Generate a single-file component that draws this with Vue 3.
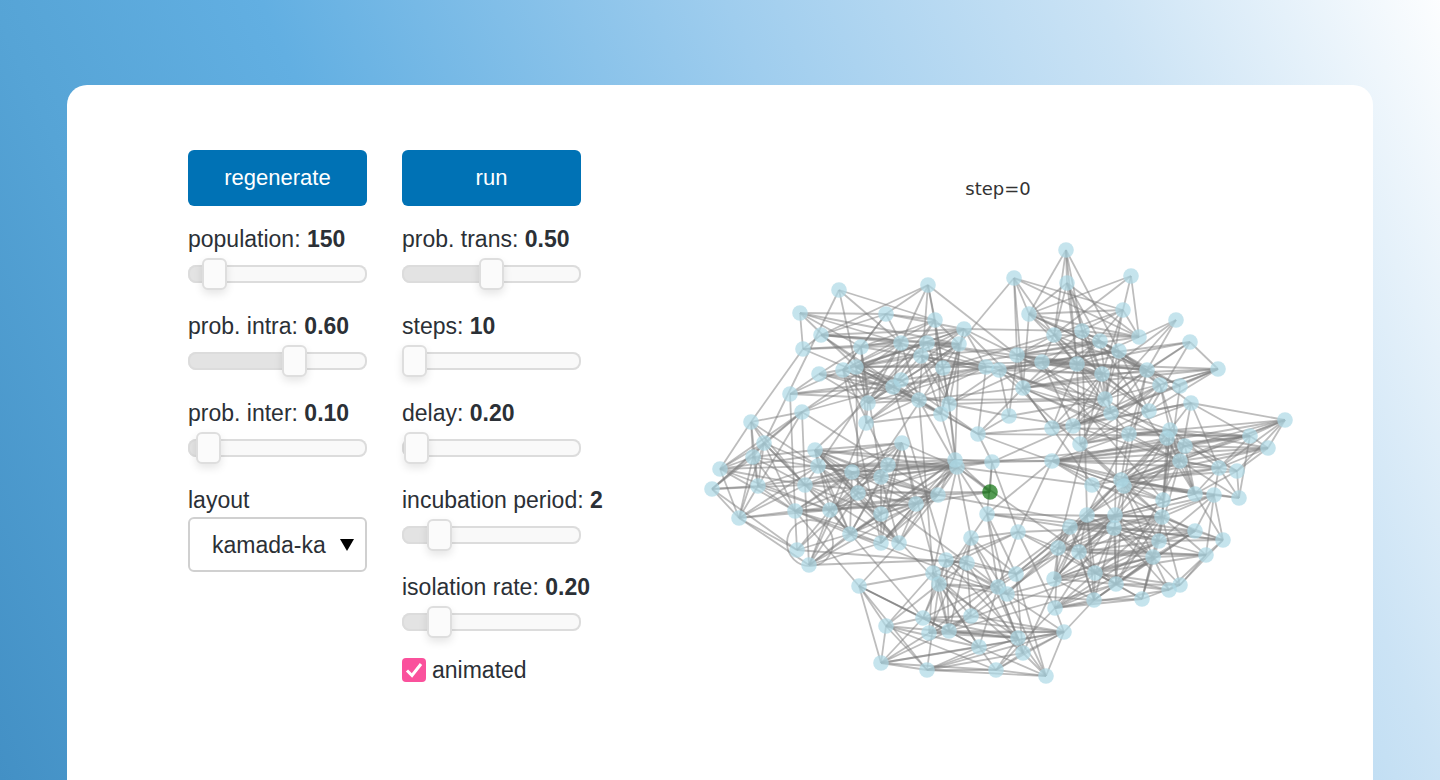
<script setup>
import { reactive, ref } from 'vue'

const network = reactive([
  { id: 'population', label: 'population', shown: '150', pos: 9 },
  { id: 'intra', label: 'prob. intra', shown: '0.60', pos: 61 },
  { id: 'inter', label: 'prob. inter', shown: '0.10', pos: 5 },
])
const simulation = reactive([
  { id: 'trans', label: 'prob. trans', shown: '0.50', pos: 50 },
  { id: 'steps', label: 'steps', shown: '10', pos: 0 },
  { id: 'delay', label: 'delay', shown: '0.20', pos: 1 },
  { id: 'incubation', label: 'incubation period', shown: '2', pos: 16 },
  { id: 'isolation', label: 'isolation rate', shown: '0.20', pos: 16 },
])
const layout = ref('kamada-ka')
const animated = ref(true)

const nodes = `839,290 800,313 886,314 821,335 803,349 861,347 819,374 843,370 856,367 790,394
868,403 802,412 928,285 1014,278 1066,250 1067,283 935,320 964,329 959,344 901,343
927,343 921,356 943,368 901,380 893,387 919,400 949,404 1029,314 1054,335 1017,355
1042,362 986,367 999,370 1023,388 1077,364 1131,276 1123,310 1176,320 1139,337 1190,342
1082,331 1100,341 1119,351 1102,374 1147,370 1160,385 1180,386 1218,369 1105,399 1111,413
1149,411 1191,403 751,422 764,443 753,457 720,469 712,489 739,518 758,486 815,450
818,466 805,485 795,511 830,510 852,472 866,423 858,493 850,534 797,550 809,565
881,514 881,543 888,465 881,477 899,543 941,414 978,434 1009,416 902,443 955,460
957,467 992,462 990,492 938,495 916,504 987,514 971,538 1018,532 946,560 967,563
933,573 1052,461 1052,428 1073,426 1080,444 1070,527 1058,548 1016,574 1129,434 1170,430
1167,438 1185,446 1180,461 1250,436 1268,448 1285,420 1219,468 1237,471 1239,498 1214,495
1195,494 1163,500 1121,480 1124,486 1092,485 1087,515 1115,515 1114,528 1162,517 1195,531
1159,541 1153,557 1223,540 1206,555 1079,552 1095,573 1116,584 1180,585 859,586 939,584
886,626 923,618 929,633 949,631 971,616 998,587 1007,594 881,663 927,670 979,647
996,670 1054,579 1055,608 1064,632 1018,638 1023,653 1046,676 1094,600 1142,599 1169,590`
  .split(/\s+/)
  .map((pair) => pair.split(',').map(Number))

const infected = 82

// Neighbour lists: "node:neighbours"
const links = `0:53,8,16,19 1:2,4,19,5,8,18 2:3,5,19,16,17,7 3:12,4,19,20,18,24,25,17 4:5,52,24,19,3
6:5,8,23,24,25,10 9:19,24,25,62,6,23 12:19,16,25,29,22,2 13:18,27,29,33,36,38,28
14:28,27,40,42,34,15 15:27,28,34,43,41,38,48 35:27,28,36,38,36 36:27,28,38,43,48,40,34
37:38,43,48,44 38:27,28,29,40,34 39:34,47,48,50,44,30 47:46,45,50,34,43,49,33,48
51:103,105,50,99,93,102,106,44 52:11,53,54,58,61,60 55:54,53,52,11,57,60,61,62,63
56:57,53,54,58,68,61,11 57:55,54,68,61,62,63,69,60 69:63,66,70,67,88,71,61,64
68:57,56,63,89,62,67,66 11:53,55,58,24,19,17,72,61 53:54,57,58,60,61,62,63
54:57,59,61,64,62 58:54,60,62,63,64,57 128:74,90,137,138,130,131,133,62,139
130:137,129,138,131,144,139,90,140 137:131,133,132,139,140,138,143,130
138:139,140,145,143,144,129,146 140:146,139,145,143,144,142 146:139,145,143,97,136,144
143:147,145,139,132,133,134,142,136,131 147:141,148,125,126,142,136 148:126,125,142,120,127
149:126,142,121,127,125 127:123,121,126,125,122,118 123:122,149,125,124,118,121,109
122:109,110,119,117,127,120,118 108:107,103,106,109,112,102 109:120,117,106,108,118,113,119
105:103,104,101,106,91,107,102,112,98 104:91,101,102,106,107,112,103,99
103:91,99,101,112,98,106 106:112,113,102,99,110,91 107:112,102,99,101,110
91:102,112,113,114,111,100,79,93,87,85,98,101,110,119
112:101,102,110,111,114,118,120,121,115,109,100,98 82:80,83,81,84,79,66
81:80,72,79,87,91,93,103,85,64,76 80:79,78,64,72,73,59,60,25,26,75,83,84,66,86,90,67
76:24,25,23,77,91,92,103,31,33 77:32,26,93,29,48 85:95,118,122,136,129,135,80,97
87:86,90,88,117,96,126,135,142 10:65,24,25,5,31,18 65:5,18,31,63,22,75
92:43,48,49,34,50,99,33 93:47,46,45,51,43,48,49,102,30 94:98,99,50,48,51,45,34,112
99:110,118,111 100:118,116,49 117:123,149,97 115:136,97,102 121:136,148 96:135,136,123 95:110,112,109
118:113,124,148 45:98,99,94 78:61,63,55 79:63,59,61,26 83:67,71,73,61 84:62,69,74,66
16:7,24,10,26 17:5,7,10,75 31:34,43,23,8 32:43,42,20,26 29:41,44,49,22 33:17,43,44,25`
  .split(/\s+/)
  .map((row) => {
    const [from, list] = row.split(':')
    return [Number(from), list.split(',').map(Number)]
  })

const communities = [
  { density: 0.38, members: [5, 7, 8, 10, 16, 17, 18, 19, 20, 21, 22, 23, 24, 25, 26, 31, 75] },
  { density: 0.38, members: [27, 28, 29, 30, 32, 33, 34, 40, 41, 42, 43, 44, 45, 46, 48, 49, 50] },
  { density: 0.46, members: [59, 60, 61, 62, 63, 64, 66, 67, 70, 71, 72, 73, 74, 78, 79, 80, 83, 84] },
  { density: 0.5, members: [98, 99, 100, 101, 102, 110, 111, 113, 114] },
  { density: 0.7, members: [95, 96, 115, 116, 117, 118, 119, 120, 121, 124, 125, 126, 141, 142, 147] },
  { density: 0.42, members: [86, 88, 89, 90, 97, 129, 135, 136, 131, 132, 133, 134, 139, 144, 145] },
]

function buildEdges() {
  const seen = new Set()
  const out = []
  const add = (a, b) => {
    const key = a < b ? `${a}-${b}` : `${b}-${a}`
    if (a === b || seen.has(key)) return
    seen.add(key)
    out.push([a, b])
  }
  links.forEach(([from, list]) => list.forEach((to) => add(from, to)))
  let seed = 20
  const random = () => {
    seed = (seed * 16807) % 2147483647
    return seed / 2147483647
  }
  const group = new Map()
  communities.forEach((c) => c.members.forEach((n) => group.set(n, c)))
  const ids = [...group.keys()]
  ids.forEach((a, i) => {
    ids.slice(i + 1).forEach((b) => {
      const far = Math.hypot(nodes[a][0] - nodes[b][0], nodes[a][1] - nodes[b][1])
      const same = group.get(a) === group.get(b)
      const chance = same ? group.get(a).density : far < 190 ? 0.045 : 0
      if (random() < chance) add(a, b)
    })
  })
  return out
}

const edgePath = buildEdges()
  .map(([a, b]) => `M${nodes[a].join(' ')}L${nodes[b].join(' ')}`)
</script>

<template>
  <main class="page">
    <section class="card">
      <form class="controls" @submit.prevent>
        <div class="column">
          <button type="button" class="action">regenerate</button>
          <div v-for="s in network" :key="s.id" class="field">
            <label :for="s.id">{{ s.label }}: <b>{{ s.shown }}</b></label>
            <input :id="s.id" v-model.number="s.pos" type="range" min="0" max="100" :style="{ '--fill': s.pos + '%' }" />
          </div>
          <div class="choice">
            <label for="layout">layout</label>
            <div class="select-box">
              <select id="layout" v-model="layout">
                <option>kamada-ka</option>
              </select>
              <svg class="arrow" viewBox="0 0 14 12" aria-hidden="true"><path d="M0 0H14L7 12Z" /></svg>
            </div>
          </div>
        </div>
        <div class="column">
          <button type="button" class="action">run</button>
          <div v-for="s in simulation" :key="s.id" class="field">
            <label :for="s.id">{{ s.label }}: <b>{{ s.shown }}</b></label>
            <input :id="s.id" v-model.number="s.pos" type="range" min="0" max="100" :style="{ '--fill': s.pos + '%' }" />
          </div>
          <label class="check">
            <span class="tick">
              <input v-model="animated" type="checkbox" />
              <svg v-if="animated" viewBox="0 0 24 24" aria-hidden="true"><path d="M5 12.5L10 17.5L19 6" /></svg>
            </span>
            animated
          </label>
        </div>
      </form>

      <figure class="plot">
        <figcaption>step=0</figcaption>
        <svg class="graph" viewBox="699 240 598 450" role="img" aria-label="network graph">
          <g class="edges">
            <path v-for="d in edgePath" :key="d" :d="d" />
            <circle cx="810" cy="543" r="23" />
          </g>
          <circle
            v-for="([x, y], i) in nodes"
            :key="i"
            :cx="x"
            :cy="y"
            r="7.8"
            :class="['node', { infected: i === infected }]"
          />
        </svg>
      </figure>
    </section>
  </main>
</template>

<style>
body {
  margin: 0;
}
</style>

<style scoped>
.page {
  box-sizing: border-box;
  display: flex;
  min-height: 100vh;
  padding: 85px 67px 0;
  background: linear-gradient(66deg, #4390c5 0%, #56a4d6 19%, #62afe2 34%, #9fcdee 60%, #cbe3f5 81%, #fff 101%);
  font-family: "Liberation Sans", Arial, sans-serif;
  font-size: 23px;
  color: #2b3036;
}
.card {
  box-sizing: border-box;
  flex: 1;
  display: flex;
  align-items: flex-start;
  gap: 118px;
  padding: 65px 76px 0 121px;
  border-radius: 20px 20px 0 0;
  background: #fff;
}
.controls {
  display: grid;
  grid-template-columns: 179px 179px;
  gap: 35px;
}
.column {
  display: flex;
  flex-direction: column;
}
.action {
  height: 56px;
  margin: 0 0 19px;
  border: 0;
  border-radius: 6px;
  background: #0072b5;
  color: #fff;
  font: inherit;
  font-size: 22px;
}
.field {
  display: flex;
  flex-direction: column;
  gap: 5px;
  margin-bottom: 22px;
}
label {
  line-height: 28px;
  white-space: nowrap;
}
input[type='range'] {
  appearance: none;
  width: 100%;
  height: 32px;
  margin: 0;
  background: none;
}
input[type='range']::-webkit-slider-runnable-track {
  height: 18px;
  border-radius: 8px;
  background: linear-gradient(to right, #e3e3e3 var(--fill), #f9f9f9 var(--fill));
  box-shadow: inset 0 0 0 2px #dcdcdc;
}
input[type='range']::-webkit-slider-thumb {
  appearance: none;
  box-sizing: border-box;
  width: 25px;
  height: 32px;
  margin-top: -7px;
  border: 2px solid #dedede;
  border-radius: 6px;
  background: #fbfbfb;
  box-shadow: 0 4px 8px rgba(0, 0, 0, 0.1);
}
.choice {
  display: flex;
  flex-direction: column;
  gap: 3px;
}
.select-box {
  position: relative;
}
select {
  appearance: none;
  box-sizing: border-box;
  display: block;
  width: 100%;
  height: 55px;
  padding: 0 30px 0 22px;
  border: 2px solid #d0d0d0;
  border-radius: 6px;
  background: #fff;
  color: inherit;
  font: inherit;
}
.arrow {
  position: absolute;
  top: 22px;
  right: 13px;
  width: 14px;
  height: 12px;
  pointer-events: none;
}
.check {
  display: flex;
  align-items: center;
  gap: 6px;
  height: 20px;
}
.tick {
  position: relative;
  width: 24px;
  height: 24px;
}
.tick input {
  appearance: none;
  display: block;
  width: 24px;
  height: 24px;
  margin: 0;
  border-radius: 4px;
  background: #fa519c;
}
.tick input:not(:checked) {
  background: #ddd;
}
.tick svg {
  position: absolute;
  inset: 0;
  fill: none;
  stroke: #fff;
  stroke-width: 3;
  pointer-events: none;
}
.plot {
  flex: 1;
  margin: 27px 0 0;
  text-align: center;
}
figcaption {
  font: 18px/24px "DejaVu Sans", sans-serif;
  color: #333;
}
.graph {
  display: block;
  width: 100%;
  margin-top: 39px;
}
.edges {
  fill: none;
  stroke: #7c7c7c;
  stroke-opacity: 0.5;
  stroke-width: 1.8;
}
.node {
  fill: #add8e6;
  fill-opacity: 0.7;
}
.node.infected {
  fill: #0c700c;
}
</style>
